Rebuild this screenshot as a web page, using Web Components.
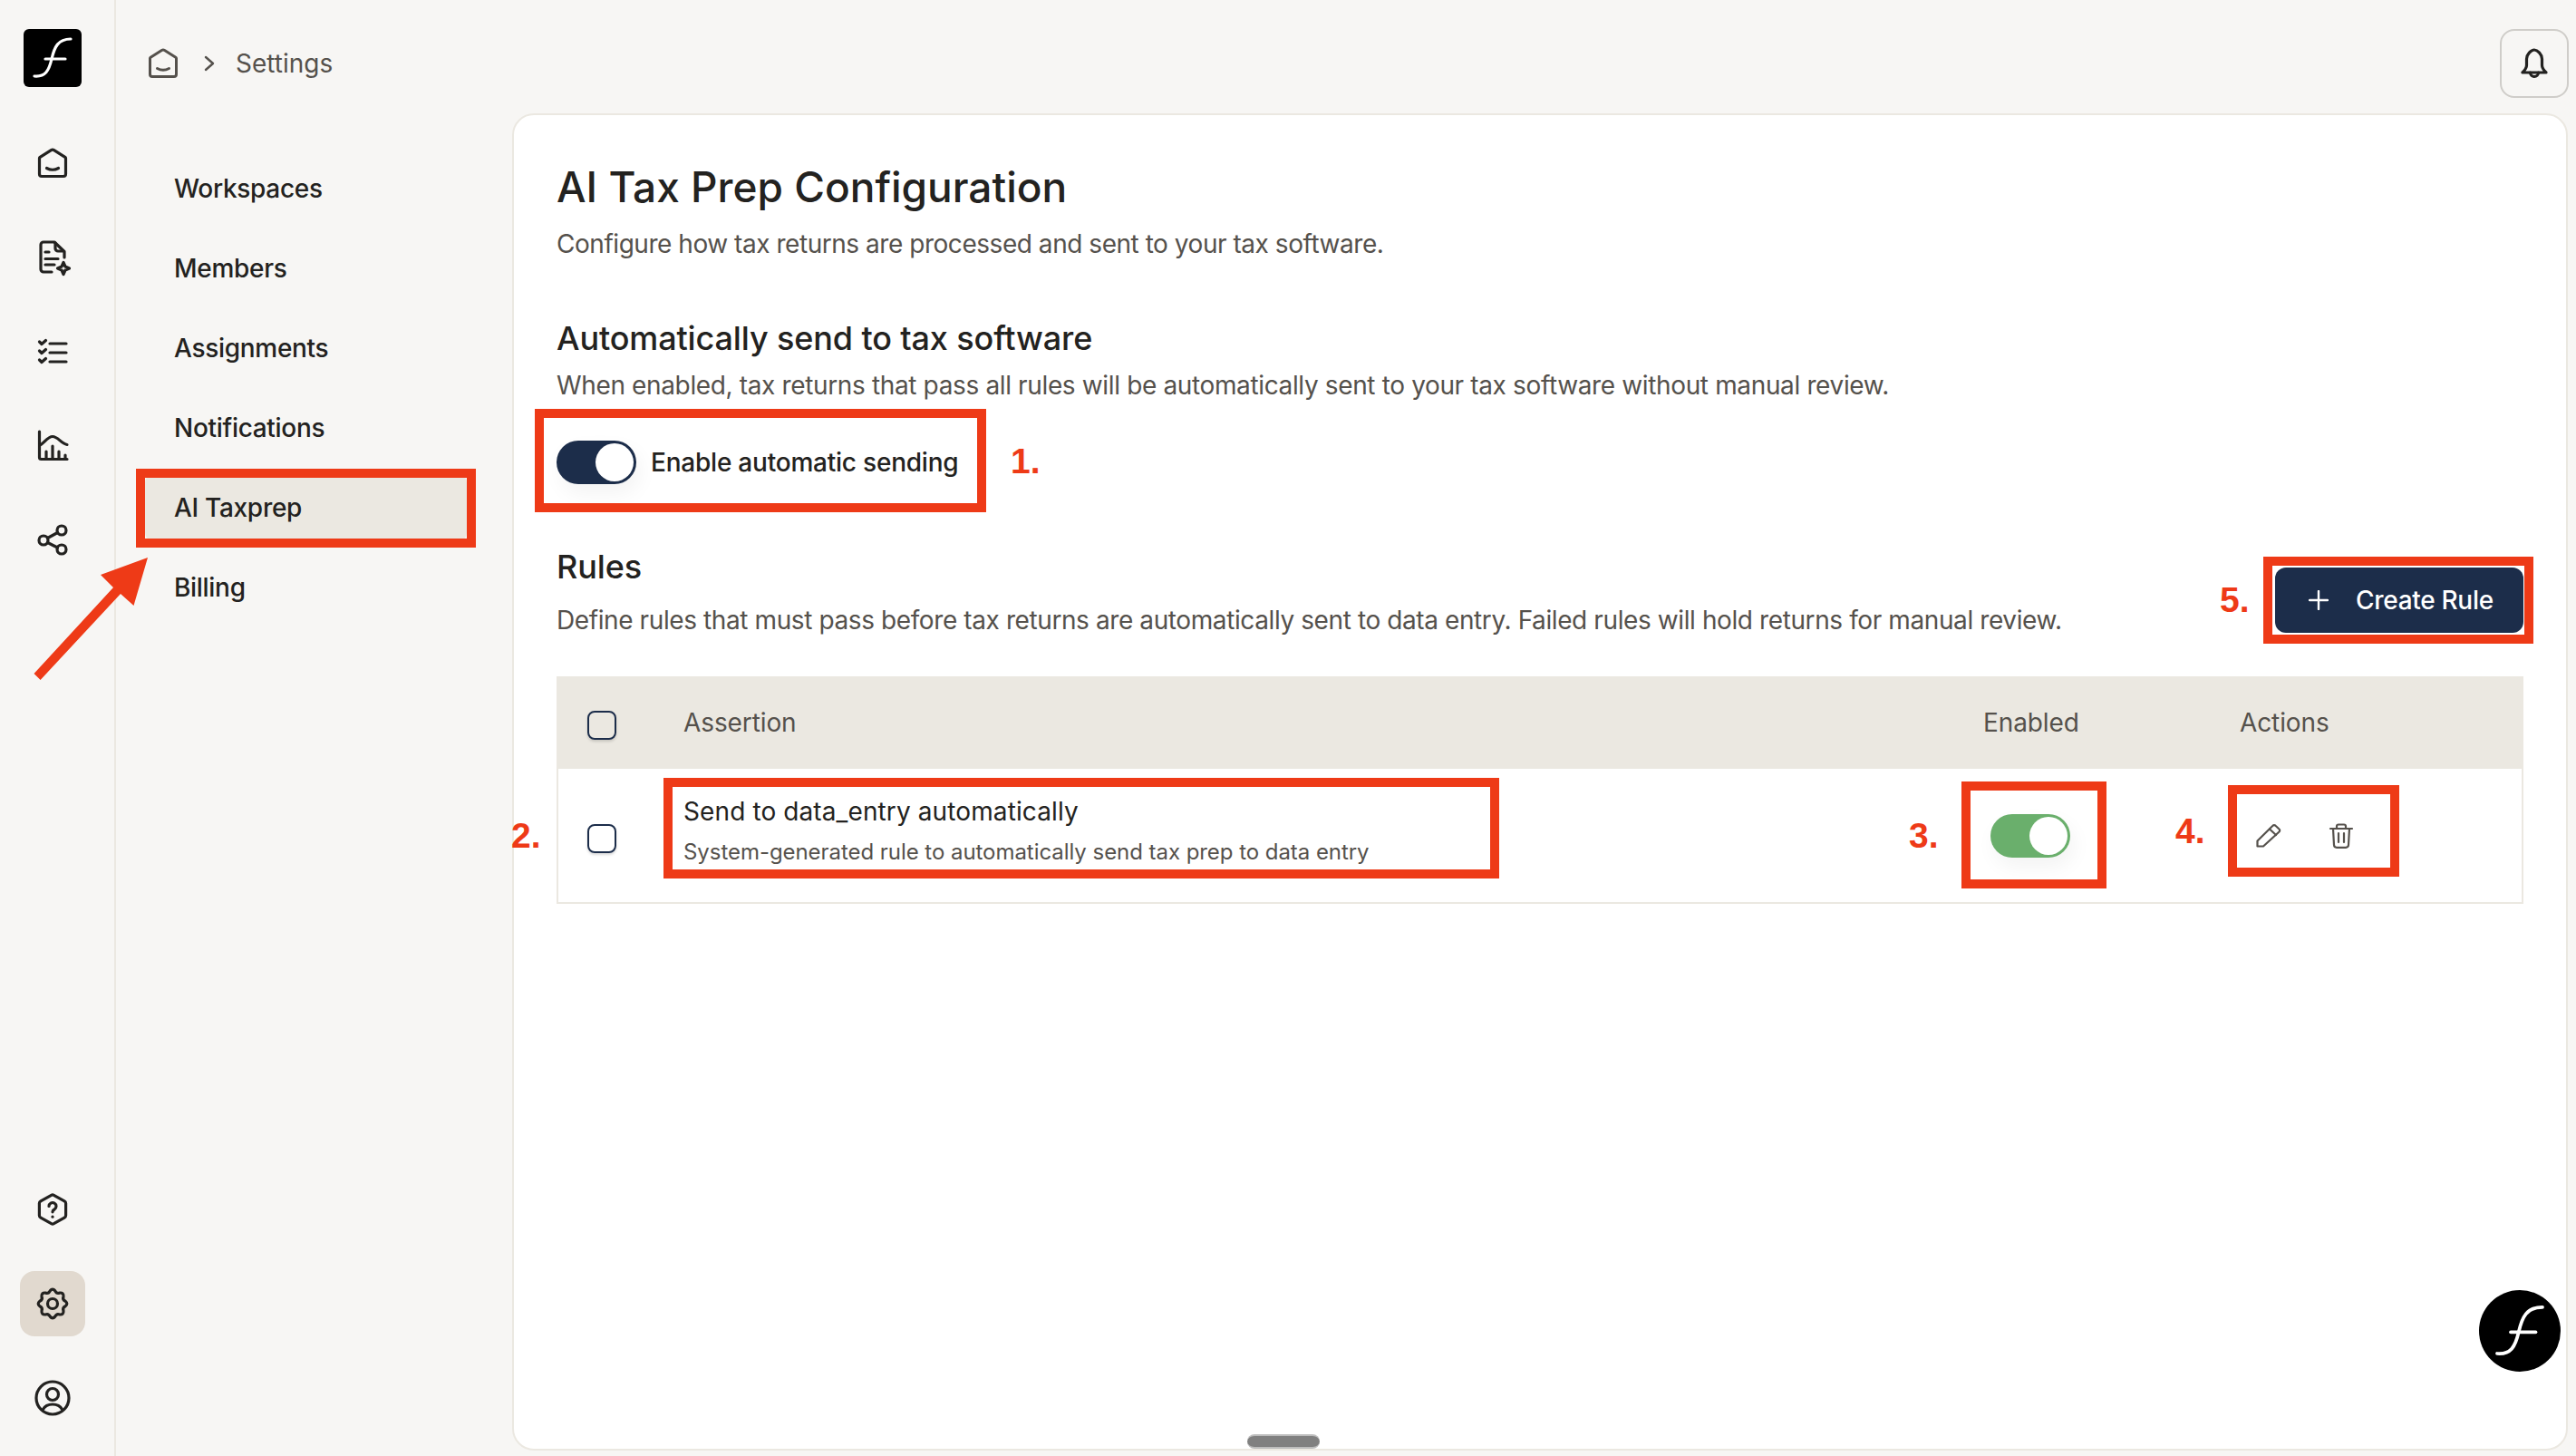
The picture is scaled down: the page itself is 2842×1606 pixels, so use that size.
<!DOCTYPE html>
<html lang="en">
<head>
<meta charset="utf-8">
<title>AI Tax Prep Configuration</title>
<style>
  html, body { margin: 0; height: 100%; overflow: hidden; background: #f7f6f4; }
  body { font-family: Inter, "Liberation Sans", sans-serif; color: #232220; }
  .shell { display: flex; width: 2842px; height: 1606px; position: relative; }
  .right { flex: 1; display: flex; flex-direction: column; min-width: 0; }
  .below { flex: 1; display: flex; min-height: 0; }
</style>
</head>
<body>
<div class="shell">
  <app-rail></app-rail>
  <div class="right">
    <top-bar></top-bar>
    <div class="below">
      <settings-nav>
        <nav-item>Workspaces</nav-item>
        <nav-item>Members</nav-item>
        <nav-item>Assignments</nav-item>
        <nav-item>Notifications</nav-item>
        <nav-item active>AI Taxprep</nav-item>
        <nav-item>Billing</nav-item>
      </settings-nav>
      <config-card></config-card>
    </div>
  </div>

  <!-- red annotations drawn over the screenshot -->
  <annot-box x="150" y="517" w="375" h="87"></annot-box>
  <annot-box x="590" y="451" w="498" h="114"></annot-box>
  <annot-box x="732" y="858" w="922" h="111"></annot-box>
  <annot-box x="2164" y="862" w="160" h="118"></annot-box>
  <annot-box x="2458" y="866" w="189" h="101"></annot-box>
  <annot-box x="2497" y="614" w="298" h="96"></annot-box>
  <annot-num x="1115" y="487">1.</annot-num>
  <annot-num x="564" y="900">2.</annot-num>
  <annot-num x="2106" y="900">3.</annot-num>
  <annot-num x="2400" y="895">4.</annot-num>
  <annot-num x="2449" y="640">5.</annot-num>
  <annot-arrow></annot-arrow>
  <chat-bubble></chat-bubble>
  <scroll-pill></scroll-pill>
</div>

<script>
const gearPath = () => {
  // 8 rounded teeth around the centre of a 36 box
  let d = '';
  const pt = (i, r) => {
    const a = (i * Math.PI) / 8 - Math.PI / 2;
    return (18 + r * Math.cos(a)).toFixed(2) + ' ' + (18 + r * Math.sin(a)).toFixed(2);
  };
  for (let i = 0; i < 16; i++) {
    const r = i % 2 === 0 ? 17.5 : 11.5;
    const mid = pt(i + 0.5, 14.4);
    d += (i === 0 ? 'M' + pt(0.5 - 1, 14.4) : '') + ' Q' + pt(i, r) + ' ' + mid;
  }
  return d + ' Z';
};

const ICONS = {
  home: '<path d="M6 32.500h24a2.500 2.500 0 0 0 2.500-2.500V12.600a1.600 1.600 0 0 0-.7-1.300L19.600 3.600a3 3 0 0 0-3.200 0L4.200 11.300a1.600 1.600 0 0 0-.7 1.300V30A2.500 2.500 0 0 0 6 32.500Z"/><path d="M11.500 23.500Q18 27 24.500 23.500"/>',
  doc: '<path d="M17 34H8a3 3 0 0 1-3-3V4a3 3 0 0 1 3-3h12l11 10.500V18"/><path d="M21 2v6a3 3 0 0 0 3 3h6" /><path d="M10 12h4M10 19.500h14M10 26h10"/><path d="M30 23.500l2 4.500 4.500 2-4.500 2-2 4.500-2-4.500-4.500-2 4.500-2z"/>',
  list: '<path d="M15 9h18M15 19h18M15 29h18"/><path d="M3.500 7l2.500 2.500 4.500-4M3.500 17l2.500 2.500 4.500-4M3.500 27l2.500 2.500 4.500-4"/>',
  chart: '<path d="M3.500 2v28.500a2 2 0 0 0 2 2H34"/><path d="M3.500 17C8 16 12 7.500 18 7.500S27 15 34 16.500"/><path d="M11 32v-8M18 32V18M25 32v-8M32 32v-4"/>',
  share: '<circle cx="28" cy="7" r="5"/><circle cx="8" cy="18" r="5"/><circle cx="28" cy="28" r="5"/><path d="M12.500 15.500l11-6M12.500 20.500l11 5.500"/>',
  help: '<path d="M16.600 2.300a3 3 0 0 1 2.800 0l11.700 6.600a3 3 0 0 1 1.500 2.500v13.200a3 3 0 0 1-1.500 2.500L19.400 33.700a3 3 0 0 1-2.800 0L4.900 27.100a3 3 0 0 1-1.500-2.500V11.400a3 3 0 0 1 1.500-2.500Z"/><path d="M14 14.500a4 4 0 1 1 6 3.500c-1.500.8-2 1.500-2 2.800"/><path d="M18 26v.2"/>',
  gear: '<path d="' + gearPath() + '"/><circle cx="18" cy="18" r="5.500"/>',
  account: '<circle cx="18" cy="18" r="18"/><circle cx="18" cy="14" r="6.500"/><path d="M7.500 30.500q3-5.500 10.500-5.500t10.500 5.500"/>',
  bell: '<path d="M5 28h26c-3-3-4.500-5-4.500-8v-7c0-5-5-10-8.500-10s-8.500 5-8.500 10v7c0 3-1.500 5-4.500 8Z"/><path d="M13.500 28a4.500 4.500 0 0 0 9 0"/>',
  edit: '<path d="M5.500 30.500V24.500L22.500 7.800a2 2 0 0 1 3 0l4 3.700a2 2 0 0 1 0 3L12 30.500Z"/><path d="M19 11.500l7 6.500"/>',
  trash: '<path d="M6 11h24"/><path d="M13 11V8.500a2 2 0 0 1 2-2h6a2 2 0 0 1 2 2V11"/><path d="M9 11l1 18a3 3 0 0 0 3 2.800h10a3 3 0 0 0 3-2.800l1-18"/><path d="M15 16v10M21 16v10"/>',
};

const LOGO = '<path d="M12 52C24 53 28 46 31 33 34 20 38 11 52 11"/><path d="M24 33h22"/>';

class AppIcon extends HTMLElement {
  constructor() {
    super();
    this.attachShadow({ mode: 'open' });
  }

  connectedCallback() {
    const name = this.getAttribute('name');
    const stroke = this.getAttribute('stroke') || '3.2';
    const color = this.getAttribute('color') || '#232220';
    this.shadowRoot.innerHTML = `
      <style>
        :host { display: inline-flex; width: 36px; height: 36px; flex: none; }
        svg { width: 36px; height: 36px; overflow: visible; fill: none; stroke: ${color}; stroke-width: ${stroke}; stroke-linecap: round; stroke-linejoin: round; }
      </style>
      <svg viewBox="0 0 36 36">${ICONS[name]}</svg>
    `;
  }
}
customElements.define('app-icon', AppIcon);

class AppRail extends HTMLElement {
  constructor() {
    super();
    this.attachShadow({ mode: 'open' });
  }

  connectedCallback() {
    const top = ['home', 'doc', 'list', 'chart', 'share'];
    const bottom = ['help', 'gear', 'account'];
    const item = (n) => `<div class="item ${n === 'gear' ? 'on' : ''}"><app-icon name="${n}"></app-icon></div>`;
    this.shadowRoot.innerHTML = `
      <style>
        :host { display: flex; flex-direction: column; box-sizing: border-box; width: 128px; height: 1606px; flex: none; padding: 32px 0 28px 22px; border-right: 2px solid #ebe8e1; }
        .logo { width: 64px; height: 64px; margin: 0 0 48px 4px; background: #000; border-radius: 6px; }
        .logo svg { display: block; fill: none; stroke: #fff; stroke-width: 3.2; stroke-linecap: round; }
        .group { display: flex; flex-direction: column; gap: 32px; }
        .spacer { flex: 1; }
        .item { width: 72px; height: 72px; display: flex; align-items: center; justify-content: center; border-radius: 16px; }
        .item.on { background: #e1d9cf; }
      </style>
      <div class="logo"><svg viewBox="0 0 64 64" width="64" height="64">${LOGO}</svg></div>
      <div class="group">${top.map(item).join('')}</div>
      <div class="spacer"></div>
      <div class="group">${bottom.map(item).join('')}</div>
    `;
  }
}
customElements.define('app-rail', AppRail);

class TopBar extends HTMLElement {
  constructor() {
    super();
    this.attachShadow({ mode: 'open' });
  }

  connectedCallback() {
    this.shadowRoot.innerHTML = `
      <style>
        :host { display: flex; align-items: flex-start; justify-content: space-between; box-sizing: border-box; height: 125px; padding: 32px 8px 0 34px; flex: none; }
        .crumbs { display: flex; align-items: center; height: 76px; color: #55514c; font-size: 28px; }
        .chev { width: 12px; height: 20px; margin: 0 23px 0 27px; fill: none; stroke: #55514c; stroke-width: 2.4; stroke-linecap: round; stroke-linejoin: round; }
        .bell { box-sizing: border-box; width: 76px; height: 76px; border: 2px solid #cfcdc9; border-radius: 16px; display: flex; align-items: center; justify-content: center; }
      </style>
      <div class="crumbs">
        <app-icon name="home" color="#55514c" stroke="3"></app-icon>
        <svg class="chev" viewBox="0 0 12 20"><path d="M2 3l8 7-8 7"/></svg>
        <span>Settings</span>
      </div>
      <div class="bell"><app-icon name="bell"></app-icon></div>
    `;
  }
}
customElements.define('top-bar', TopBar);

class NavItem extends HTMLElement {
  constructor() {
    super();
    this.attachShadow({ mode: 'open' });
  }

  connectedCallback() {
    this.shadowRoot.innerHTML = `
      <style>
        :host { display: flex; align-items: center; box-sizing: border-box; height: 72px; padding-left: 32px; font-size: 28px; font-weight: 500; letter-spacing: -.3px; color: #232220; border-radius: 8px; }
        :host([active]) { background: #ebe8e1; }
      </style>
      <slot></slot>
    `;
  }
}
customElements.define('nav-item', NavItem);

class SettingsNav extends HTMLElement {
  constructor() {
    super();
    this.attachShadow({ mode: 'open' });
  }

  connectedCallback() {
    this.shadowRoot.innerHTML = `
      <style>
        :host { display: flex; flex-direction: column; gap: 16px; box-sizing: border-box; width: 437px; flex: none; padding: 47px 50px 0 32px; }
      </style>
      <slot></slot>
    `;
  }
}
customElements.define('settings-nav', SettingsNav);

class ToggleSwitch extends HTMLElement {
  constructor() {
    super();
    this.attachShadow({ mode: 'open' });
  }

  connectedCallback() {
    const color = this.getAttribute('color') || '#1c2d4a';
    this.shadowRoot.innerHTML = `
      <style>
        :host { display: inline-flex; justify-content: flex-end; align-items: center; box-sizing: border-box; width: 88px; height: 48px; flex: none; padding-right: 3px; background: ${color}; border-radius: 24px; box-shadow: 4px 10px 22px rgba(0,0,0,.05); }
        .knob { width: 42px; height: 42px; border-radius: 50%; background: #fff; }
      </style>
      <div class="knob"></div>
    `;
  }
}
customElements.define('toggle-switch', ToggleSwitch);

class CheckBox extends HTMLElement {
  constructor() {
    super();
    this.attachShadow({ mode: 'open' });
  }

  connectedCallback() {
    this.shadowRoot.innerHTML = `
      <style>
        :host { display: block; box-sizing: border-box; width: 32px; height: 32px; border: 2px solid #1c2d4a; border-radius: 8px; background: transparent; box-shadow: 0 2px 3px rgba(0,0,0,.15); }
      </style>
    `;
  }
}
customElements.define('check-box', CheckBox);

class RulesTable extends HTMLElement {
  constructor() {
    super();
    this.attachShadow({ mode: 'open' });
  }

  connectedCallback() {
    this.shadowRoot.innerHTML = `
      <style>
        :host { display: block; margin-top: 42px; }
        .row { display: grid; grid-template-columns: 140px 1435px 282px 1fr; box-sizing: border-box; }
        .head { height: 102px; background: #ebe8e1; align-items: center; color: #55514c; font-size: 28px; letter-spacing: -.1px; }
        .head check-box { margin: 6px 0 0 34px; }
        .head .en { margin-left: -1px; }
        .body { height: 149px; border: 2px solid #ebe8e1; border-top: 0; align-items: start; }
        .body .c0 { padding: 61px 0 0 32px; }
        .body .c1 { padding: 29px 0 0 0; margin-left: -2px; }
        .body .c2 { padding: 50px 0 0 3px; margin-left: 2px; }
        .body .c3 { padding: 55px 0 0 12px; display: flex; gap: 44px; }
        .title { font-size: 28px; line-height: 36px; letter-spacing: .11px; color: #232220; }
        .sub { font-size: 24px; line-height: 32px; margin-top: 11px; letter-spacing: -.05px; color: #55514c; }
      </style>
      <div class="row head">
        <div><check-box></check-box></div>
        <div>Assertion</div>
        <div class="en">Enabled</div>
        <div>Actions</div>
      </div>
      <div class="row body">
        <div class="c0"><check-box></check-box></div>
        <div class="c1">
          <div class="title">Send to data_entry automatically</div>
          <div class="sub">System-generated rule to automatically send tax prep to data entry</div>
        </div>
        <div class="c2"><toggle-switch color="#6aaf6c"></toggle-switch></div>
        <div class="c3">
          <app-icon name="edit" color="#55514c" stroke="2.200"></app-icon>
          <app-icon name="trash" color="#55514c" stroke="2.200"></app-icon>
        </div>
      </div>
    `;
  }
}
customElements.define('rules-table', RulesTable);

class ConfigCard extends HTMLElement {
  constructor() {
    super();
    this.attachShadow({ mode: 'open' });
  }

  connectedCallback() {
    this.shadowRoot.innerHTML = `
      <style>
        :host { display: block; box-sizing: border-box; width: 2268px; height: 1475px; padding: 49px 47px 0; background: #fff; border: 2px solid #ebe8e1; border-radius: 24px; }
        h1, h2, p { margin: 0; font-weight: 500; }
        h1 { font-size: 46px; line-height: 60px; color: #232220; }
        h2 { font-size: 36px; line-height: 44px; letter-spacing: -.13px; color: #232220; }
        p { font-size: 28px; line-height: 40px; font-weight: 400; color: #55514c; }
        .lead { margin-top: 13px; letter-spacing: -.46px; }
        .auto { margin-top: 62px; }
        .auto p { margin-top: 10px; letter-spacing: -.36px; }
        .enable { display: flex; align-items: center; gap: 16px; margin-top: 41px; font-size: 28px; font-weight: 500; letter-spacing: -.22px; color: #232220; }
        .rules { display: flex; justify-content: space-between; align-items: flex-end; margin-top: 69px; }
        .rules p { margin-top: 17px; letter-spacing: -.4px; }
        .create { display: flex; align-items: center; box-sizing: border-box; width: 274px; height: 72px; margin-bottom: 6px; padding-left: 37px; gap: 30px; background: #1c2d4a; color: #fff; font-size: 28px; font-weight: 500; letter-spacing: -.3px; border-radius: 12px; }
        .create svg { width: 22px; height: 22px; fill: none; stroke: #fff; stroke-width: 2.400; stroke-linecap: round; flex: none; }
      </style>
      <h1>AI Tax Prep Configuration</h1>
      <p class="lead">Configure how tax returns are processed and sent to your tax software.</p>
      <section class="auto">
        <h2>Automatically send to tax software</h2>
        <p>When enabled, tax returns that pass all rules will be automatically sent to your tax software without manual review.</p>
      </section>
      <div class="enable"><toggle-switch></toggle-switch><span>Enable automatic sending</span></div>
      <div class="rules">
        <div>
          <h2>Rules</h2>
          <p>Define rules that must pass before tax returns are automatically sent to data entry. Failed rules will hold returns for manual review.</p>
        </div>
        <div class="create"><svg viewBox="0 0 22 22"><path d="M11 1v20M1 11h20"/></svg><span>Create Rule</span></div>
      </div>
      <rules-table></rules-table>
    `;
  }
}
customElements.define('config-card', ConfigCard);

class AnnotBox extends HTMLElement {
  constructor() {
    super();
    this.attachShadow({ mode: 'open' });
  }

  connectedCallback() {
    const g = (k) => this.getAttribute(k) + 'px';
    this.shadowRoot.innerHTML = `
      <style>
        :host { position: absolute; left: ${g('x')}; top: ${g('y')}; width: ${g('w')}; height: ${g('h')}; box-sizing: border-box; border: 10px solid #ee3a17; }
      </style>
    `;
  }
}
customElements.define('annot-box', AnnotBox);

class AnnotNum extends HTMLElement {
  constructor() {
    super();
    this.attachShadow({ mode: 'open' });
  }

  connectedCallback() {
    const g = (k) => this.getAttribute(k) + 'px';
    this.shadowRoot.innerHTML = `
      <style>
        :host { position: absolute; left: ${g('x')}; top: ${g('y')}; font: bold 39px/44px "Liberation Sans", sans-serif; color: #ee3a17; }
      </style>
      <slot></slot>
    `;
  }
}
customElements.define('annot-num', AnnotNum);

class AnnotArrow extends HTMLElement {
  constructor() {
    super();
    this.attachShadow({ mode: 'open' });
  }

  connectedCallback() {
    this.shadowRoot.innerHTML = `
      <style>
        :host { position: absolute; left: 0; top: 600px; width: 180px; height: 160px; }
        svg { display: block; }
      </style>
      <svg width="180" height="160" viewBox="0 600 180 160"><polygon fill="#ee3a17" points="37.500,743 44.600,750 133,655 147.500,668 163,615 111,634 125,648"/></svg>
    `;
  }
}
customElements.define('annot-arrow', AnnotArrow);

class ChatBubble extends HTMLElement {
  constructor() {
    super();
    this.attachShadow({ mode: 'open' });
  }

  connectedCallback() {
    this.shadowRoot.innerHTML = `
      <style>
        :host { position: absolute; left: 2735px; top: 1423px; width: 90px; height: 90px; display: flex; align-items: center; justify-content: center; background: #000; border-radius: 50%; }
        svg { fill: none; stroke: #fff; stroke-width: 3; stroke-linecap: round; }
      </style>
      <svg viewBox="0 0 64 64" width="80" height="80">${LOGO}</svg>
    `;
  }
}
customElements.define('chat-bubble', ChatBubble);

class ScrollPill extends HTMLElement {
  constructor() {
    super();
    this.attachShadow({ mode: 'open' });
  }

  connectedCallback() {
    this.shadowRoot.innerHTML = `
      <style>
        :host { position: absolute; left: 1376px; top: 1582px; width: 80px; height: 16px; box-sizing: border-box; background: #808080; border-top: 2px solid #bdbdbd; border-bottom: 2px solid #bdbdbd; border-radius: 8px; }
      </style>
    `;
  }
}
customElements.define('scroll-pill', ScrollPill);
</script>
</body>
</html>
